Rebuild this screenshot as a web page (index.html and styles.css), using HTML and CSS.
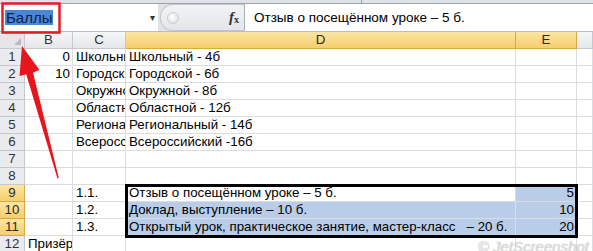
FILE: index.html
```html
<!DOCTYPE html>
<html lang="ru">
  <head>
    <meta charset="UTF-8" />
    <title>Баллы</title>
    <link rel="stylesheet" href="styles.css">
  </head>
  <body>
    <div class="window">
      <!-- ribbon edge -->
      <div class="ribbon-edge"><span class="ribbon-split"></span></div>

      <!-- formula bar -->
      <div class="formula-bar">
        <div class="name-box">
          <span class="name-text">Баллы</span>
          <span class="drop">&#9662;</span>
        </div>
        <div class="fx-area">
          <span class="grip"></span>
          <span class="fx"><i>f</i><sub>x</sub></span>
        </div>
        <div class="formula-input">Отзыв о посещённом уроке – 5 б.</div>
      </div>

      <!-- sheet -->
      <div class="sheet">
        <div class="hd corner"><span class="tri"></span></div>
        <div class="hd col">B</div>
        <div class="hd col">C</div>
        <div class="hd col sel">D</div>
        <div class="hd col sel">E</div>
        <div class="hd col"></div>

        <div class="hd row">1</div>
        <div class="c num">0</div><div class="c">Школьный</div><div class="c">Школьный - 4б</div><div class="c"></div><div class="c"></div>
        <div class="hd row">2</div>
        <div class="c num">10</div><div class="c">Городской</div><div class="c">Городской - 6б</div><div class="c"></div><div class="c"></div>
        <div class="hd row">3</div>
        <div class="c"></div><div class="c">Окружной</div><div class="c">Окружной - 8б</div><div class="c"></div><div class="c"></div>
        <div class="hd row">4</div>
        <div class="c"></div><div class="c">Областной</div><div class="c">Областной - 12б</div><div class="c"></div><div class="c"></div>
        <div class="hd row">5</div>
        <div class="c"></div><div class="c">Региональный</div><div class="c">Региональный - 14б</div><div class="c"></div><div class="c"></div>
        <div class="hd row">6</div>
        <div class="c"></div><div class="c">Всероссийский</div><div class="c">Всероссийский -16б</div><div class="c"></div><div class="c"></div>
        <div class="hd row">7</div>
        <div class="c"></div><div class="c"></div><div class="c"></div><div class="c"></div><div class="c"></div>
        <div class="hd row">8</div>
        <div class="c"></div><div class="c"></div><div class="c"></div><div class="c"></div><div class="c"></div>
        <div class="hd row sel">9</div>
        <div class="c"></div><div class="c">1.1.</div><div class="c">Отзыв о посещённом уроке – 5 б.</div><div class="c num hl">5</div><div class="c"></div>
        <div class="hd row sel">10</div>
        <div class="c"></div><div class="c">1.2.</div><div class="c hl">Доклад, выступление – 10 б.</div><div class="c num hl">10</div><div class="c"></div>
        <div class="hd row sel">11</div>
        <div class="c"></div><div class="c">1.3.</div><div class="c hl">Открытый урок, практическое занятие, мастер-класс &nbsp;&nbsp;– 20 б.</div><div class="c num hl">20</div><div class="c"></div>
        <div class="hd row">12</div>
        <div class="c">Призёры</div><div class="c">&nbsp;</div><div class="c"></div><div class="c"></div><div class="c"></div>

        <!-- selected range frame, lies over D9:E11 -->
        <div class="range"></div>
      </div>

      <!-- annotation -->
      <svg class="mark" width="593" height="251" viewBox="0 0 593 251">
        <rect x="2.5" y="3.5" width="57" height="29" fill="none" stroke="#e31b23" stroke-width="2.5"/>
        <polygon fill="#e8151c" points="22,46 39.5,70 33,72.5 58.8,178 57.4,178.2 26.2,74.2 19.5,76"/>
      </svg>
      <div class="watermark">© JetScreenshot</div>
    </div>
  </body>
</html>
```

FILE: styles.css
```css
html, body {
  margin: 0;
  padding: 0;
  background: #ffffff;
}

body {
  font-family: "Liberation Sans", Arial, sans-serif;
  color: #000;
}

.window {
  position: relative;
  width: 593px;
  height: 251px;
  overflow: hidden;
}

/* ribbon edge */
.ribbon-edge {
  height: 3px;
  background: #dfe3e8;
  border-bottom: 1px solid #9da3ab;
}

.ribbon-split {
  display: block;
  margin-left: 361px;
  width: 1px;
  height: 3px;
  background: #9da3ab;
}

/* formula bar */
.formula-bar {
  display: flex;
  height: 27px;
  background: #dfe3e8;
  border-bottom: 1px solid #b9bec6;
}

.name-box {
  width: 158px;
  background: #fff;
  display: flex;
  align-items: center;
  padding-left: 5px;
  box-sizing: border-box;
}

.name-text {
  font-size: 15px;
  line-height: 15px;
  background: #4a86d6;
  color: #0d1f45;
  padding: 0 1px;
}

.drop {
  margin-left: auto;
  margin-right: 3px;
  font-size: 10px;
  color: #333;
}

.fx-area {
  width: 85px;
  display: flex;
  align-items: center;
  background: linear-gradient(#f2f3f5, #e3e6ea);
  border-radius: 13px 0 0 13px;
  border: 1px solid #c3c7cd;
  border-right: 1px solid #a9aeb5;
  box-sizing: border-box;
  margin-left: 2px;
}

.grip {
  width: 10px;
  height: 10px;
  border-radius: 50%;
  background: radial-gradient(circle at 40% 40%, #ffffff, #d5d8dd);
  border: 1px solid #c9ccd1;
  margin-left: 6px;
}

.fx {
  margin-left: auto;
  margin-right: 5px;
  font-family: "Liberation Serif", serif;
  font-weight: bold;
  font-size: 15px;
  color: #333;
}

.fx sub {
  font-size: 10px;
  vertical-align: -1px;
}

.formula-input {
  flex: 1;
  background: #fff;
  font-size: 13.5px;
  line-height: 27px;
  padding-left: 9px;
  white-space: nowrap;
}

/* sheet */
.sheet {
  position: relative;
  display: grid;
  grid-template-columns: 25px 48px 53px 390px 61px 16px;
  grid-auto-rows: 17px;
}

.hd {
  box-sizing: border-box;
  background: linear-gradient(#f6f7f8, #e4e6e9);
  border-right: 1px solid #c5c8cc;
  border-bottom: 1px solid #c5c8cc;
  color: #333;
  font-size: 13.3px;
  line-height: 16px;
  text-align: center;
}

.hd.row {
  background: #e9ebee;
}

.hd.sel {
  background: linear-gradient(#fbe6a3, #f6cd6b);
  border-right-color: #d9a948;
  border-bottom-color: #d9a948;
  color: #2a2a2a;
}

.corner {
  position: relative;
  background: #e4e6e9;
}

.tri {
  position: absolute;
  right: 3px;
  bottom: 3px;
  width: 0;
  height: 0;
  border-left: 7px solid transparent;
  border-bottom: 7px solid #b8bcc2;
}

.c {
  box-sizing: border-box;
  border-right: 1px solid #dadcdf;
  border-bottom: 1px solid #dadcdf;
  font-size: 13.3px;
  line-height: 16px;
  padding: 0 2px 0 3px;
  white-space: nowrap;
  overflow: hidden;
}

.c.num {
  text-align: right;
}

.c.hl {
  background: #b9cde8;
}

.range {
  position: absolute;
  left: 125px;
  top: 152px;
  width: 453px;
  height: 54px;
  box-sizing: border-box;
  border: 3px solid #000;
}

/* annotation on top */
.mark {
  position: absolute;
  left: 0;
  top: 0;
  z-index: 5;
}

.watermark {
  position: absolute;
  right: 4px;
  bottom: -4px;
  font-size: 15px;
  font-style: italic;
  color: rgba(255, 255, 255, 0.6);
  text-shadow: 0 0 1px #9a9a9a;
  z-index: 6;
}
```
